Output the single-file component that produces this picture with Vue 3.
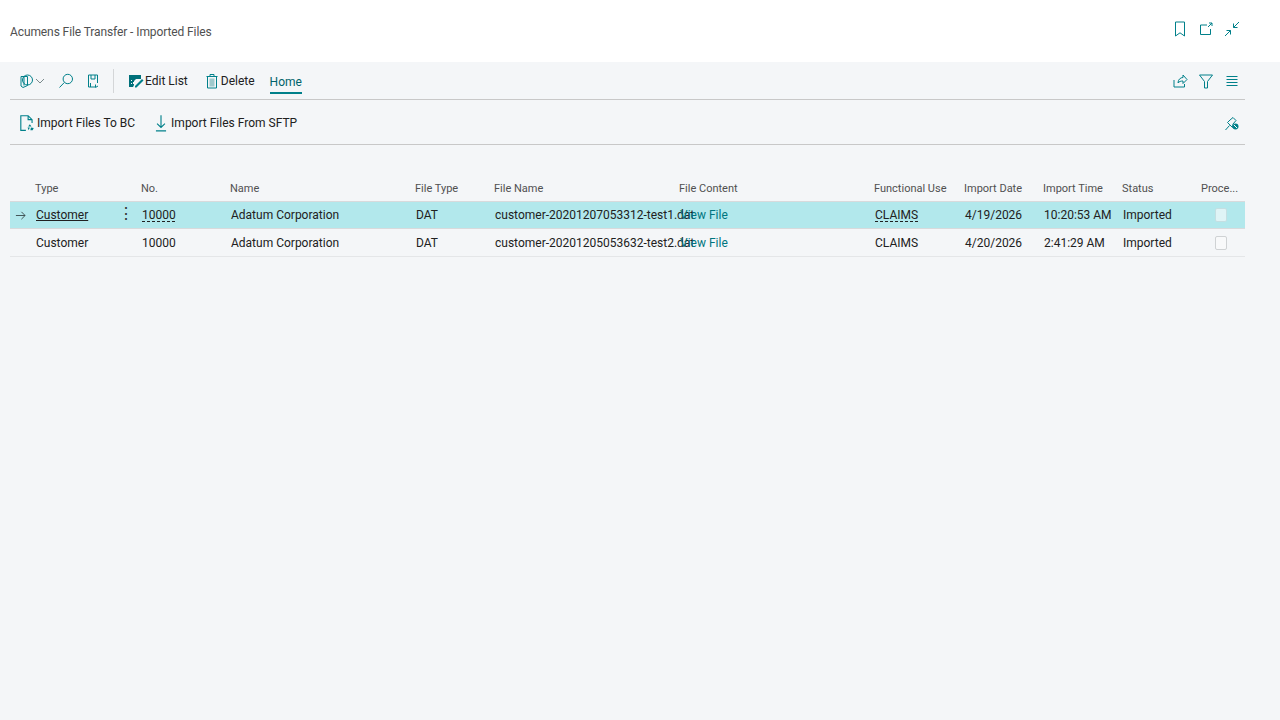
<template>
  <div class="page">
    <header class="title-bar">
      <span class="title">Acumens File Transfer - Imported Files</span>
      <div class="title-icons">
        <svg class="icon" viewBox="0 0 16 16"><path d="M3.5 1h9v14L8 11.8 3.5 15z" /></svg>
        <svg class="icon" viewBox="0 0 16 16"><path d="M9 4H2.500v9.500h10V8M10 6l4-4M11 2h3v3" /></svg>
        <svg class="icon" viewBox="0 0 16 16"><path d="M15 1 9.500 6.500M9.500 2.500v4h4M1 15l5.500-5.500M2.500 9.500h4v4" /></svg>
      </div>
    </header>

    <main class="content">
      <nav class="menu-row">
        <div class="menu-left">
          <button class="tool">
            <svg class="icon" viewBox="0 0 16 16"><circle cx="9.500" cy="7" r="5" /><path d="M3 3.500h6.500v9L5 14.500 3 13zM6 3.500v9" /></svg>
            <svg class="chevron" viewBox="0 0 10 10"><path d="m1 3 4 4 4-4" /></svg>
          </button>
          <button class="tool search">
            <svg class="icon" viewBox="0 0 16 16"><circle cx="9.800" cy="6" r="4.700" /><path d="M6.300 9.500 1.500 14.500" /></svg>
          </button>
          <button class="tool saved">
            <svg class="icon" viewBox="0 0 16 16"><path d="M10 14H3.500V2h9v8M6 2v4h4V2M5.500 14v-4M10.500 11.500v3l2.500-1.500" /></svg>
          </button>
          <span class="divider"></span>
          <button class="action edit">
            <svg class="icon filled" viewBox="0 0 16 16"><path d="M1 2h12v4H8L6 8v1H5v2h1v1l-1 2H1zM3 7v1h1V7zM3 10v1h1v-1z" /><path class="cut" d="m7 13 7-7 1.500 1.500-7 7H7z" /></svg>
            Edit List
          </button>
          <button class="action delete">
            <svg class="icon bin" viewBox="0 0 16 16"><path d="M3.500 3.500h9V15h-9zM2.500 3.500h11M6 3.500V1.500h4v2" /><path class="solid" d="M5.500 5.500h5v8h-5z" /></svg>
            Delete
          </button>
          <a class="tab">Home</a>
        </div>
        <div class="menu-right">
          <svg class="icon" viewBox="0 0 16 16"><path d="M2 7v7h10.500v-3M6 10c0-3.500 2.500-5.500 5-5.500V2l4 4.500-4 4V8C9 8 7 8.500 6 10z" /></svg>
          <svg class="icon" viewBox="0 0 16 16"><path d="M1.500 2h13L9.500 8.500V15h-3V8.500z" /></svg>
          <svg class="icon lines" viewBox="0 0 16 16"><path d="M2.500 3.500h11M2.500 6.500h11M2.500 9.500h11M2.500 12.500h11" /></svg>
        </div>
      </nav>

      <div class="action-row">
        <div class="menu-left">
          <button class="action import-bc">
            <svg class="icon big" viewBox="0 0 16 16"><path d="M7 14.500H2.500v-13h6.500l3.500 3.500v3M9 1.500v3.500h3.500" /><path class="solid" d="m10.500 9 1.500 2H9zM8.500 12h2l-1 2.500zM11.500 12l2.500.5-1 2h-2z" /></svg>
            Import Files To BC
          </button>
          <button class="action import-sftp">
            <svg class="icon big" viewBox="0 0 16 16"><path d="M8 1v11M4.500 8.500 8 12l3.500-3.500M3.500 15h9" /></svg>
            Import Files From SFTP
          </button>
        </div>
        <svg class="icon" viewBox="0 0 16 16"><path d="m1.500 15 4-4.500M3.500 7.500l5 5 .5-3.500 3-3.500-3-3L6 5z" /><circle class="solid" cx="11.500" cy="11.500" r="3" /><path class="cross" d="m9.800 9.800 3.400 3.400" /></svg>
      </div>

      <section class="list">
        <div class="row head">
          <div v-for="c in columns" :key="c.key" class="cell" :class="c.align">{{ c.label }}</div>
        </div>
        <div
          v-for="(row, i) in rows"
          :key="row.fileName"
          class="row body"
          :class="{ selected: i === 0 }"
        >
          <div class="marker">
            <svg v-if="i === 0" class="arrow" viewBox="0 0 12 12"><path d="M1 6h10M7 2l4 4-4 4" /></svg>
          </div>
          <div class="cell type-cell">
            <span :class="{ link: i === 0 }">{{ row.type }}</span>
            <span v-if="i === 0" class="dots">⋮</span>
          </div>
          <div class="cell"><span :class="{ dashed: i === 0 }">{{ row.no }}</span></div>
          <div class="cell">{{ row.name }}</div>
          <div class="cell">{{ row.fileType }}</div>
          <div class="cell">{{ row.fileName }}</div>
          <div class="cell"><a class="file-link">View File</a></div>
          <div class="cell"><span :class="{ dashed: i === 0 }">{{ row.use }}</span></div>
          <div class="cell">{{ row.date }}</div>
          <div class="cell">{{ row.time }}</div>
          <div class="cell">{{ row.status }}</div>
          <div class="cell check-cell"><span class="check"></span></div>
        </div>
      </section>
    </main>
  </div>
</template>

<script setup>
const columns = [
  { key: 'marker', label: '' },
  { key: 'type', label: 'Type' },
  { key: 'no', label: 'No.' },
  { key: 'name', label: 'Name' },
  { key: 'fileType', label: 'File Type' },
  { key: 'fileName', label: 'File Name' },
  { key: 'content', label: 'File Content' },
  { key: 'use', label: 'Functional Use' },
  { key: 'date', label: 'Import Date' },
  { key: 'time', label: 'Import Time' },
  { key: 'status', label: 'Status' },
  { key: 'processed', label: 'Proce...' }
]

const rows = [
  {
    type: 'Customer',
    no: '10000',
    name: 'Adatum Corporation',
    fileType: 'DAT',
    fileName: 'customer-20201207053312-test1.dat',
    use: 'CLAIMS',
    date: '4/19/2026',
    time: '10:20:53 AM',
    status: 'Imported'
  },
  {
    type: 'Customer',
    no: '10000',
    name: 'Adatum Corporation',
    fileType: 'DAT',
    fileName: 'customer-20201205053632-test2.dat',
    use: 'CLAIMS',
    date: '4/20/2026',
    time: '2:41:29 AM',
    status: 'Imported'
  }
]
</script>

<style>
html, body {
  margin: 0;
  background: #f4f6f8;
}
</style>

<style scoped>
.page {
  width: 1280px;
  height: 720px;
  overflow: hidden;
  background: #f4f6f8;
  color: #212121;
  font-family: "Roboto", "Liberation Sans", sans-serif;
  font-size: 12px;
}

.title-bar {
  height: 62px;
  box-sizing: border-box;
  background: #fff;
  display: flex;
  align-items: center;
  justify-content: space-between;
  padding: 6px 40px 6px 10px;
}

.title {
  font-size: 12px;
  color: #505050;
  letter-spacing: -0.1px;
  margin-top: 1px;
}

.title-icons {
  display: flex;
  gap: 10px;
  margin-top: -4px;
}

.icon {
  width: 16px;
  height: 16px;
  flex: none;
  fill: none;
  stroke: #00808a;
  stroke-width: 1;
}

.icon .solid {
  fill: #00808a;
  stroke: none;
}

.icon .cross {
  stroke: #fff;
}

.icon.filled {
  stroke: none;
  fill: #00707a;
}

.icon.filled .cut {
  fill: #00808a;
}

.icon.bin .solid {
  fill: #9fc9cc;
}

.icon.big {
  width: 18px;
  height: 18px;
}

.content {
  padding: 0 35px 0 10px;
}

.menu-row {
  height: 38px;
  box-sizing: border-box;
  border-bottom: 1px solid #c8c8c8;
  display: flex;
  align-items: center;
  justify-content: space-between;
  padding-left: 8px;
}

.menu-left {
  display: flex;
  align-items: center;
}

.menu-right {
  display: flex;
  align-items: center;
  gap: 10px;
  padding-right: 5px;
}

button {
  border: 0;
  padding: 0;
  background: none;
  font: inherit;
  color: inherit;
  display: flex;
  align-items: center;
}

.chevron {
  width: 10px;
  height: 10px;
  margin-left: 1px;
  fill: none;
  stroke: #7a8a8c;
}

.search {
  margin-left: 13px;
}

.saved {
  margin-left: 11px;
}

.divider {
  width: 1px;
  height: 24px;
  margin: 0 14px 0 12px;
  background: #d4d6d8;
}

.action {
  gap: 1px;
  white-space: nowrap;
}

.delete {
  margin-left: 16px;
}

.tab {
  margin-left: 15px;
  height: 38px;
  box-sizing: border-box;
  display: flex;
  align-items: center;
  color: #00636b;
  position: relative;
  top: 1px;
}

.tab::after {
  content: "";
  position: absolute;
  left: 0;
  right: 0;
  bottom: 7px;
  height: 2px;
  background: #00808a;
}

.action-row {
  height: 45px;
  box-sizing: border-box;
  border-bottom: 1px solid #c8c8c8;
  display: flex;
  align-items: center;
  justify-content: space-between;
  padding: 2px 5px 0 8px;
}

.import-sftp {
  margin-left: 17px;
}

.list {
  padding-top: 30px;
}

.row {
  display: grid;
  grid-template-columns: 25px 106px 89px 185px 79px 185px 195px 90px 79px 79px 79px 44px;
  align-items: center;
}

.head {
  height: 27px;
  font-size: 11px;
  color: #505050;
}

.body {
  height: 28px;
  box-sizing: border-box;
  border-bottom: 1px solid #e4e6e8;
  border-top: 1px solid transparent;
  margin-top: -1px;
}

.body + .body {
  height: 29px;
}

.body .cell {
  padding-left: 1px;
  color: #212121;
}

.selected {
  background: #b2e8ec;
  border-top-color: #d8dadc;
  border-bottom-color: #d8dadc;
}

.marker {
  display: flex;
  padding-left: 5px;
}

.arrow {
  width: 11px;
  height: 11px;
  fill: none;
  stroke: #3a4a4c;
}

.cell {
  white-space: nowrap;
}

.type-cell {
  position: relative;
}

.link {
  text-decoration: underline;
}

.dashed {
  text-decoration: underline dashed;
  text-underline-offset: 2px;
}

.dots {
  position: absolute;
  left: 83px;
  top: -4px;
  font-size: 16px;
  line-height: 20px;
  color: #333;
}

.file-link {
  color: #00757f;
}

.check-cell {
  padding-left: 14px !important;
  display: flex;
}

.check {
  width: 10px;
  height: 12px;
  border: 1px solid #cfd2d4;
  border-radius: 2px;
  background: #f8f9fa;
}

.selected .check {
  background: #dff4f6;
  border-color: #c4dfe2;
}
</style>
